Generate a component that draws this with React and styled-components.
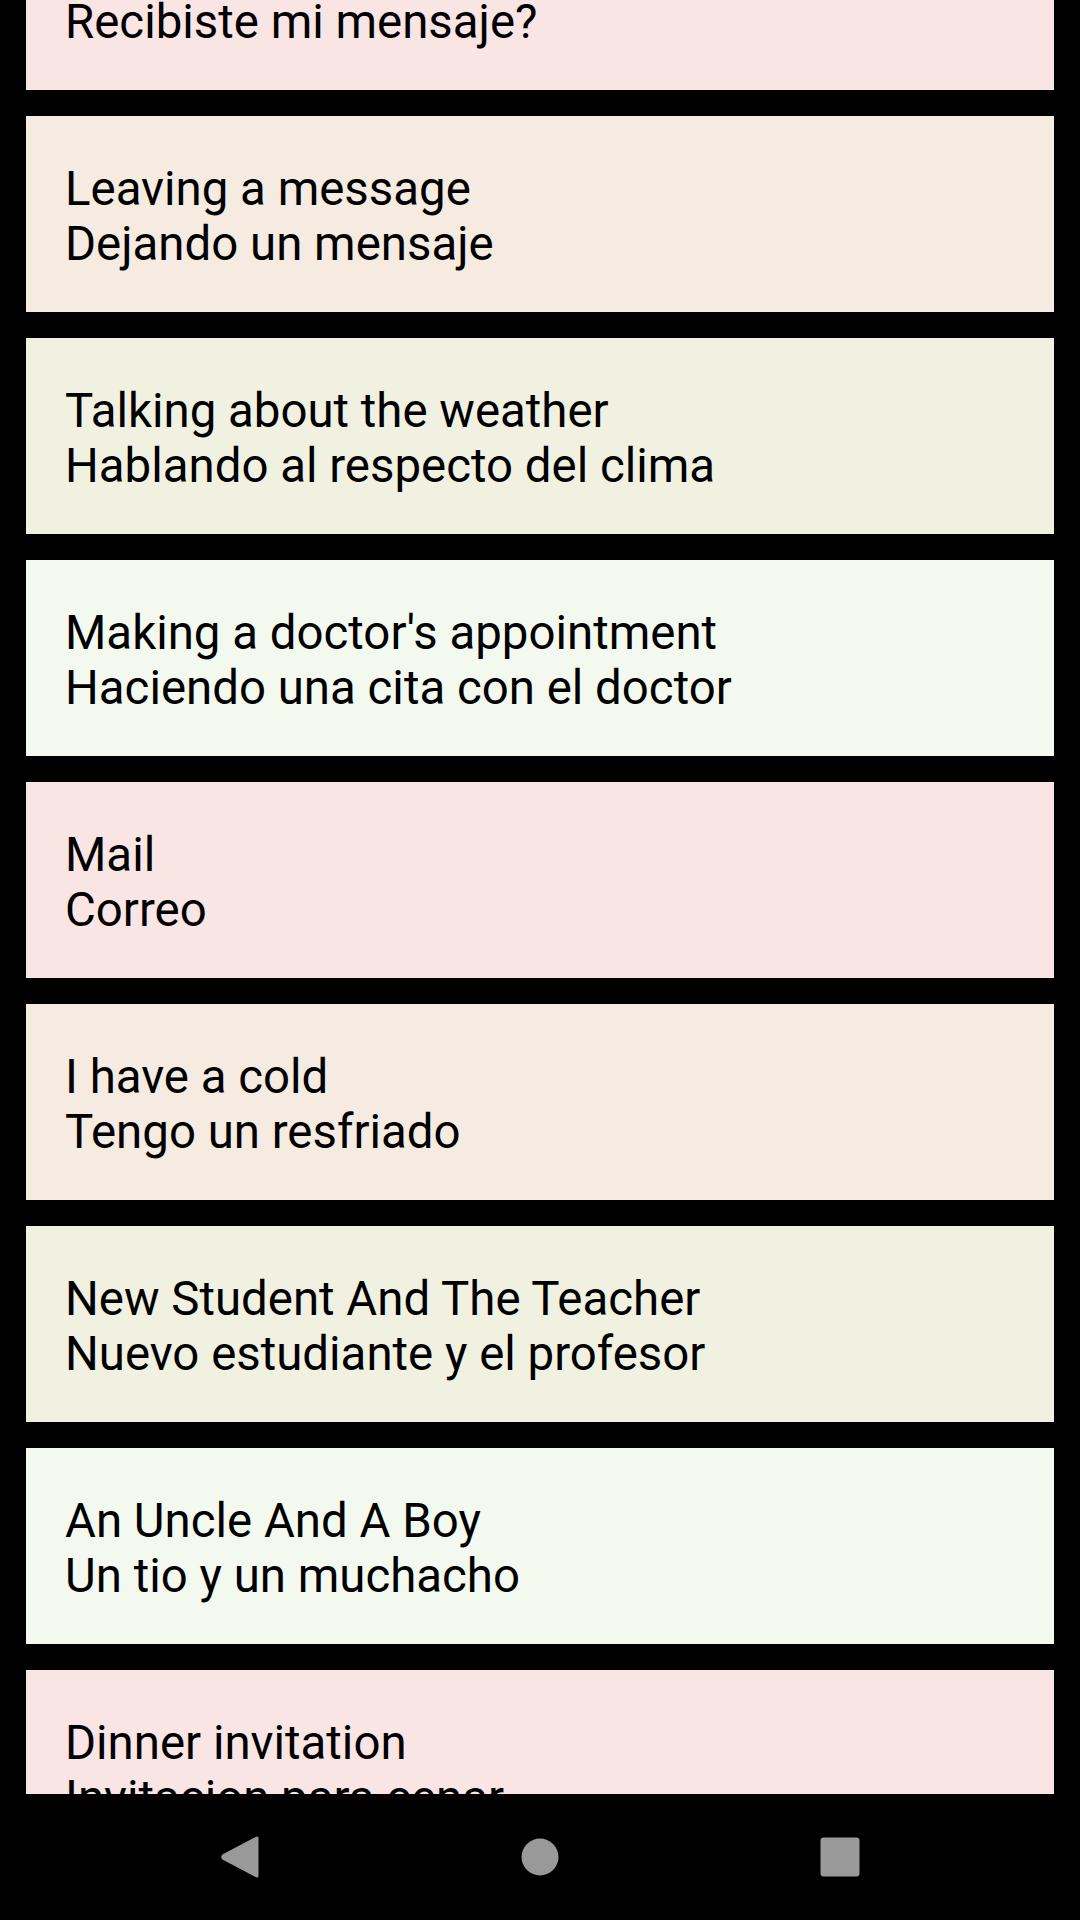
import React from "react";
import styled, { createGlobalStyle } from "styled-components";

const Global = createGlobalStyle`
  html, body { margin: 0; padding: 0; background: #000; }
  body { width: 1080px; height: 1920px; overflow: hidden; font-family: Roboto, "Noto Sans", sans-serif; }
`;

const Screen = styled.div`
  width: 1080px;
  height: 1920px;
  display: flex;
  flex-direction: column;
  background: #000;
`;

const Viewport = styled.div`
  height: 1794px;
  overflow: hidden;
`;

const List = styled.div`
  display: flex;
  flex-direction: column;
  gap: 26px;
  padding: 0 26px;
  margin-top: -106px;
`;

const Card = styled.div`
  height: 196px;
  box-sizing: border-box;
  padding: 46px 39px 0;
  background: ${(p) => p.$bg};
  flex-shrink: 0;
`;

const Line = styled.div`
  font-family: Roboto, "Noto Sans", sans-serif;
  font-size: 47.4px;
  line-height: 55px;
  color: #000;
  white-space: nowrap;
`;

const NavBar = styled.div`
  height: 126px;
  display: grid;
  grid-template-columns: 1fr 1fr 1fr;
  align-items: center;
  justify-items: center;
  background: #000;
  padding: 0 90px;
`;

const NavButton = styled.div`
  width: 60px;
  height: 60px;
  display: flex;
  align-items: center;
  justify-content: center;
`;

const COLORS = ["#FAE5E5", "#F5EBE0", "#F1F1E1", "#F3F9EF"];

const items = [
  ["Did you get my message?", "Recibiste mi mensaje?"],
  ["Leaving a message", "Dejando un mensaje"],
  ["Talking about the weather", "Hablando al respecto del clima"],
  ["Making a doctor's appointment", "Haciendo una cita con el doctor"],
  ["Mail", "Correo"],
  ["I have a cold", "Tengo un resfriado"],
  ["New Student And The Teacher", "Nuevo estudiante y el profesor"],
  ["An Uncle And A Boy", "Un tio y un muchacho"],
  ["Dinner invitation", "Invitacion para cenar"],
];

export default function App() {
  return (
    <>
      <Global />
      <Screen>
        <Viewport>
          <List>
            {items.map(([en, es], i) => (
              <Card key={i} $bg={COLORS[i % 4]}>
                <Line>{en}</Line>
                <Line>{es}</Line>
              </Card>
            ))}
          </List>
        </Viewport>
        <NavBar>
          <NavButton>
            <svg width="40" height="44" viewBox="0 0 40 44">
              <path d="M37 3 L37 41 L3.5 23.5 Q2 22 3.5 20.5 Z" fill="#999" stroke="#999" strokeWidth="3" strokeLinejoin="round" />
            </svg>
          </NavButton>
          <NavButton>
            <svg width="40" height="40" viewBox="0 0 40 40">
              <circle cx="20" cy="20" r="18.5" fill="#999" />
            </svg>
          </NavButton>
          <NavButton>
            <svg width="40" height="40" viewBox="0 0 40 40">
              <rect x="0.5" y="0.5" width="39" height="39" rx="3" fill="#999" />
            </svg>
          </NavButton>
        </NavBar>
      </Screen>
    </>
  );
}
